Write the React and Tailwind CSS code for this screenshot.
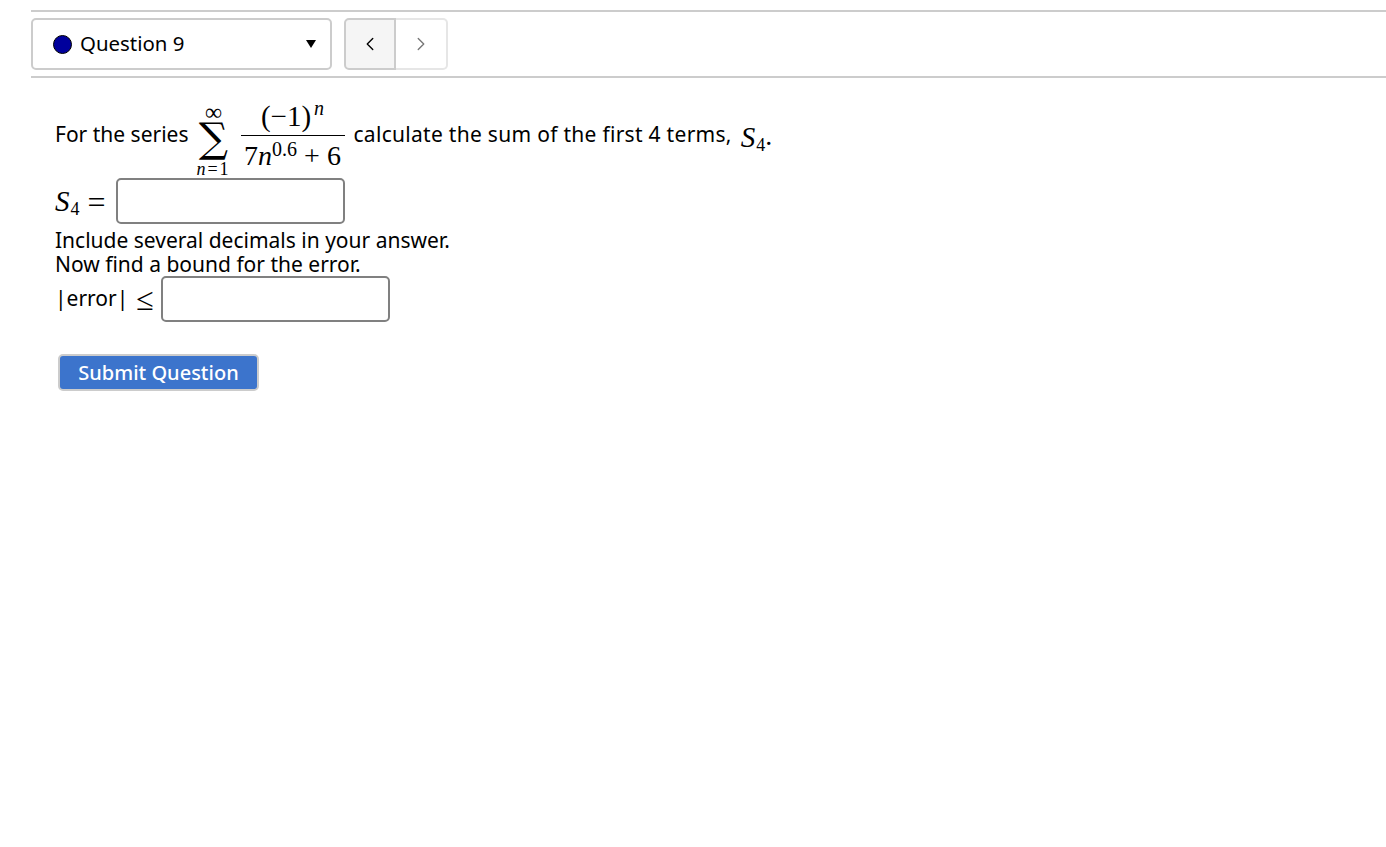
import React from 'react';
import { ChevronLeft, ChevronRight } from 'lucide-react';

const mathFont = "font-['Liberation_Serif',serif]";

const Sub4 = () => (
  <span className={`${mathFont} inline-flex items-baseline text-black`}>
    <span className="italic text-[29px] leading-none">S</span>
    <span className="text-[18px] leading-none relative top-[4px] ml-[1px]">4</span>
  </span>
);

const Series = () => (
  <span className={`${mathFont} flex items-start text-black ml-[5px]`}>
    <span className="flex flex-col items-center w-[40px] mt-[7px]">
      <span className="text-[24px] leading-[13px] h-[13px]">∞</span>
      <span className="text-[41px] leading-[38px] h-[38px] font-['DejaVu_Serif',serif]">∑</span>
      <span className="text-[18px] leading-[18px] italic mt-[3px] tracking-[2px]">n<span className="not-italic">=1</span></span>
    </span>
    <span className="flex flex-col items-center w-[104px] ml-[7px] mt-[1px]">
      <span className="text-[29px] leading-[33px] border-b border-black w-full text-center h-[36px] whitespace-nowrap">
        (−1)<span className="relative -top-[11px] ml-[3px] italic text-[20px] leading-none">n</span>
      </span>
      <span className="text-[28px] leading-[33px] mt-[3px] whitespace-nowrap">
        7<span className="italic">n</span><span className="relative -top-[9px] text-[20px] leading-none">0.6</span> + 6
      </span>
    </span>
  </span>
);

const AnswerBox = ({ className }) => (
  <input
    type="text"
    className={`w-[229px] h-[46px] bg-white border-2 border-[#808080] rounded-[5px] outline-none ${className || ''}`}
  />
);

export default function App() {
  return (
    <div className="min-h-[847px] bg-white text-black font-['Noto_Sans',sans-serif] text-[21px] pt-[10px] pl-[31px]">
      <div className="flex items-center gap-[12px] h-[68px] border-y-2 border-[#cccccc]">
        <div className="w-[301px] h-[52px] flex items-center border-2 border-[#cccccc] rounded-[5px] pl-[20px] pr-[14px] text-[20.4px]">
          <span className="w-[19px] h-[19px] rounded-full bg-[#00009c] border border-black" />
          <span className="ml-[8px] flex-1 -mt-[1px]">Question 9</span>
          <span className="w-0 h-0 border-x-[5px] border-x-transparent border-t-[8px] border-t-black" />
        </div>
        <div className="flex h-[52px]">
          <button className="w-[52px] flex items-center justify-center bg-[#f5f5f5] border-2 border-[#cccccc] rounded-l-[5px] text-black">
            <ChevronLeft size={22} strokeWidth={1.5} />
          </button>
          <button className="w-[52px] flex items-center justify-center border-2 border-l-0 border-[#e6e6e6] rounded-r-[5px] text-[#777]">
            <ChevronRight size={22} strokeWidth={1.5} />
          </button>
        </div>
      </div>

      <div className="pl-[24px] pt-[21px] leading-[24px]">
        <div className="flex items-start h-[78px]">
          <span className="mt-[23px]">For the series</span>
          <Series />
          <span className="ml-[9px] mt-[23px] tracking-[0.29px]">calculate the sum of the first 4 terms,</span>
          <span className="ml-[9px] mt-[24px] flex"><Sub4 /></span>
          <span className={`${mathFont} text-[28px] mt-[25px]`}>.</span>
        </div>
        <div className="flex items-center h-[46px] mt-[1px]">
          <Sub4 />
          <span className={`${mathFont} text-[32px] ml-[8px] mt-[2px]`}>=</span>
          <AnswerBox className="ml-[10px]" />
        </div>
        <div className="mt-[4px]">Include several decimals in your answer.</div>
        <div>Now find a bound for the error.</div>
        <div className="flex items-center h-[46px]">
          <span className="-mt-[2px]">|error|</span>
          <span className={`${mathFont} text-[32px] ml-[8px]`}>≤</span>
          <AnswerBox className="ml-[7px]" />
        </div>
        <button className="mt-[32px] ml-[3px] w-[201px] h-[37px] bg-[#3c74cc] border-2 border-[#cccccc] rounded-[5px] text-white font-medium text-[20px] leading-none">
          Submit Question
        </button>
      </div>
    </div>
  );
}
